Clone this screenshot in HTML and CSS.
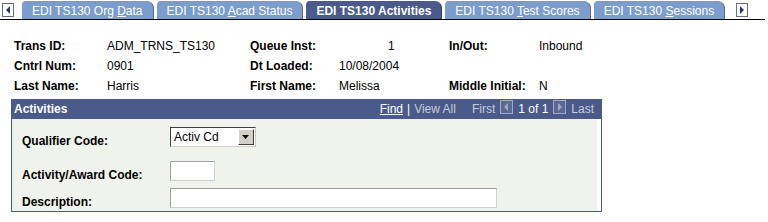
FILE: index.html
```html
<!DOCTYPE html>
<html lang="en">
<head>
    <meta charset="UTF-8">
    <title>EDI TS130 Activities</title>
    <link rel="stylesheet" href="styles.css">
</head>
<body>
    <div class="tabstrip">
        <span class="scroll-btn scroll-left">
            <svg width="12" height="14" viewBox="0 0 12 14"><rect x="0.5" y="0.5" width="11" height="13" fill="#fff" stroke="#6c6c80"/><polygon points="8,3 8,11 4,7" fill="#2c3766"/></svg>
        </span>
        <div class="tab">EDI TS130 Org <u>D</u>ata</div>
        <div class="tab">EDI TS130 <u>A</u>cad Status</div>
        <div class="tab active">EDI TS130 Activities</div>
        <div class="tab">EDI TS130 <u>T</u>est Scores</div>
        <div class="tab">EDI TS130 <u>S</u>essions</div>
        <span class="scroll-btn scroll-right">
            <svg width="12" height="14" viewBox="0 0 12 14"><rect x="0.5" y="0.5" width="11" height="13" fill="#fff" stroke="#6c6c80"/><polygon points="4,3 4,11 8,7" fill="#2c3766"/></svg>
        </span>
    </div>

    <div class="keys">
        <div class="lbl">Trans ID:</div>
        <div class="val">ADM_TRNS_TS130</div>
        <div class="lbl">Queue Inst:</div>
        <div class="val num">1</div>
        <div class="lbl">In/Out:</div>
        <div class="val">Inbound</div>

        <div class="lbl">Cntrl Num:</div>
        <div class="val">0901</div>
        <div class="lbl">Dt Loaded:</div>
        <div class="val">10/08/2004</div>
        <div></div>
        <div></div>

        <div class="lbl">Last Name:</div>
        <div class="val">Harris</div>
        <div class="lbl">First Name:</div>
        <div class="val">Melissa</div>
        <div class="lbl">Middle Initial:</div>
        <div class="val">N</div>
    </div>

    <div class="scroll-area">
        <div class="area-head">
            <span class="area-title">Activities</span>
            <div class="area-nav">
                <a class="nav-link">Find</a>
                <span class="sep">|</span>
                <span class="dim">View All</span>
                <span class="dim first">First</span>
                <svg class="nav-arrow" width="13" height="14" viewBox="0 0 13 14"><rect x="0.5" y="0.5" width="12" height="13" fill="#5b6894" stroke="#a3a9c0"/><polygon points="8,3 8,11 4,7" fill="#a3a9c0"/></svg>
                <span class="count">1 of 1</span>
                <svg class="nav-arrow" width="13" height="14" viewBox="0 0 13 14"><rect x="0.5" y="0.5" width="12" height="13" fill="#5b6894" stroke="#a3a9c0"/><polygon points="5,3 5,11 9,7" fill="#a3a9c0"/></svg>
                <span class="dim">Last</span>
            </div>
        </div>
        <div class="area-body">
            <div class="row row-first">
                <div class="lbl field-lbl">Qualifier Code:</div>
                <div class="dropdown">
                    <span class="dd-text">Activ Cd</span>
                    <span class="dd-btn"><svg width="8" height="5" viewBox="0 0 8 5"><polygon points="0,0 7,0 3.5,4" fill="#000"/></svg></span>
                </div>
            </div>
            <div class="row row-second">
                <div class="lbl field-lbl">Activity/Award Code:</div>
                <div class="edit short"></div>
            </div>
            <div class="row row-third">
                <div class="lbl field-lbl">Description:</div>
                <div class="edit long"></div>
            </div>
        </div>
    </div>
</body>
</html>
```

FILE: styles.css
```css
body {
    margin: 0;
    font-family: "Liberation Sans", Arial, sans-serif;
    font-size: 12px;
    color: #000;
    background: #fff;
}

/* tabs */
.tabstrip {
    display: flex;
    align-items: flex-end;
    height: 19px;
    width: 765px;
    border-bottom: 1px solid #000;
}
.scroll-btn {
    display: flex;
    align-self: center;
}
.scroll-left {
    margin: 0 8px 0 2px;
}
.scroll-right {
    margin-left: 8px;
}
.tab {
    height: 18px;
    line-height: 18px;
    padding: 0 10px;
    margin-right: 3px;
    background: #7b9dcd;
    color: #fff;
    white-space: nowrap;
    border-radius: 4px 7px 0 0;
    border-top: 1px solid #8a97b3;
    border-right: 1px solid #5d6a86;
    box-sizing: border-box;
}
.tab u {
    text-decoration-color: #fff;
}
.tab.active {
    background: #4a5a8b;
    font-weight: bold;
    border-top-color: #4a5a8b;
    border-right-color: #2f3a60;
}

/* key fields */
.keys {
    display: grid;
    grid-template-columns: 93px 143px 89px 110px 90px auto;
    grid-auto-rows: 20px;
    align-items: center;
    margin: 16px 0 0 14px;
}
.lbl {
    font-weight: bold;
    white-space: nowrap;
}
.val {
    white-space: nowrap;
}
.val.num {
    padding-left: 49px;
}

/* scroll area */
.scroll-area {
    width: 591px;
    margin: 3px 0 0 11px;
    border: 1px solid #4a5a8b;
    border-top: none;
    box-sizing: border-box;
}
.area-head {
    display: flex;
    align-items: center;
    height: 20px;
    background: #4a5a8b;
    color: #fff;
    padding: 0 7px 0 2px;
}
.area-title {
    font-weight: bold;
}
.area-nav {
    display: flex;
    align-items: center;
    margin-left: auto;
    gap: 4px;
}
.nav-link {
    color: #fff;
    text-decoration: underline;
}
.sep {
    color: #fff;
}
.dim {
    color: #c7cbda;
}
.first {
    margin-left: 12px;
}
.nav-arrow {
    margin: -4px 1px 0;
}
.count {
    color: #fff;
}
.area-body {
    background: #f0f2ec;
    border-right: 4px solid #fff;
    padding: 8px 0 3px 10px;
}
.row {
    display: flex;
    align-items: flex-end;
}
.row-second {
    margin-top: 14px;
}
.row-third {
    margin-top: 7px;
}
.field-lbl {
    width: 148px;
    line-height: 14px;
    margin-bottom: -1px;
}
.dropdown {
    display: flex;
    align-items: center;
    width: 86px;
    height: 20px;
    box-sizing: border-box;
    background: #fff;
    border: 1px solid;
    border-color: #404040 #d4d0c8 #d4d0c8 #404040;
}
.dd-text {
    flex: 1;
    padding-left: 3px;
}
.dd-btn {
    display: flex;
    align-items: center;
    justify-content: center;
    width: 16px;
    height: 16px;
    margin-right: 1px;
    background: #d4d0c8;
    border: 1px solid;
    border-color: #fff #404040 #404040 #fff;
    box-sizing: border-box;
}
.edit {
    height: 20px;
    box-sizing: border-box;
    background: #fff;
    border: 1px solid;
    border-color: #a0a0a0 #d0d0d0 #d0d0d0 #a0a0a0;
}
.edit.short {
    width: 45px;
}
.edit.long {
    width: 327px;
}
```
